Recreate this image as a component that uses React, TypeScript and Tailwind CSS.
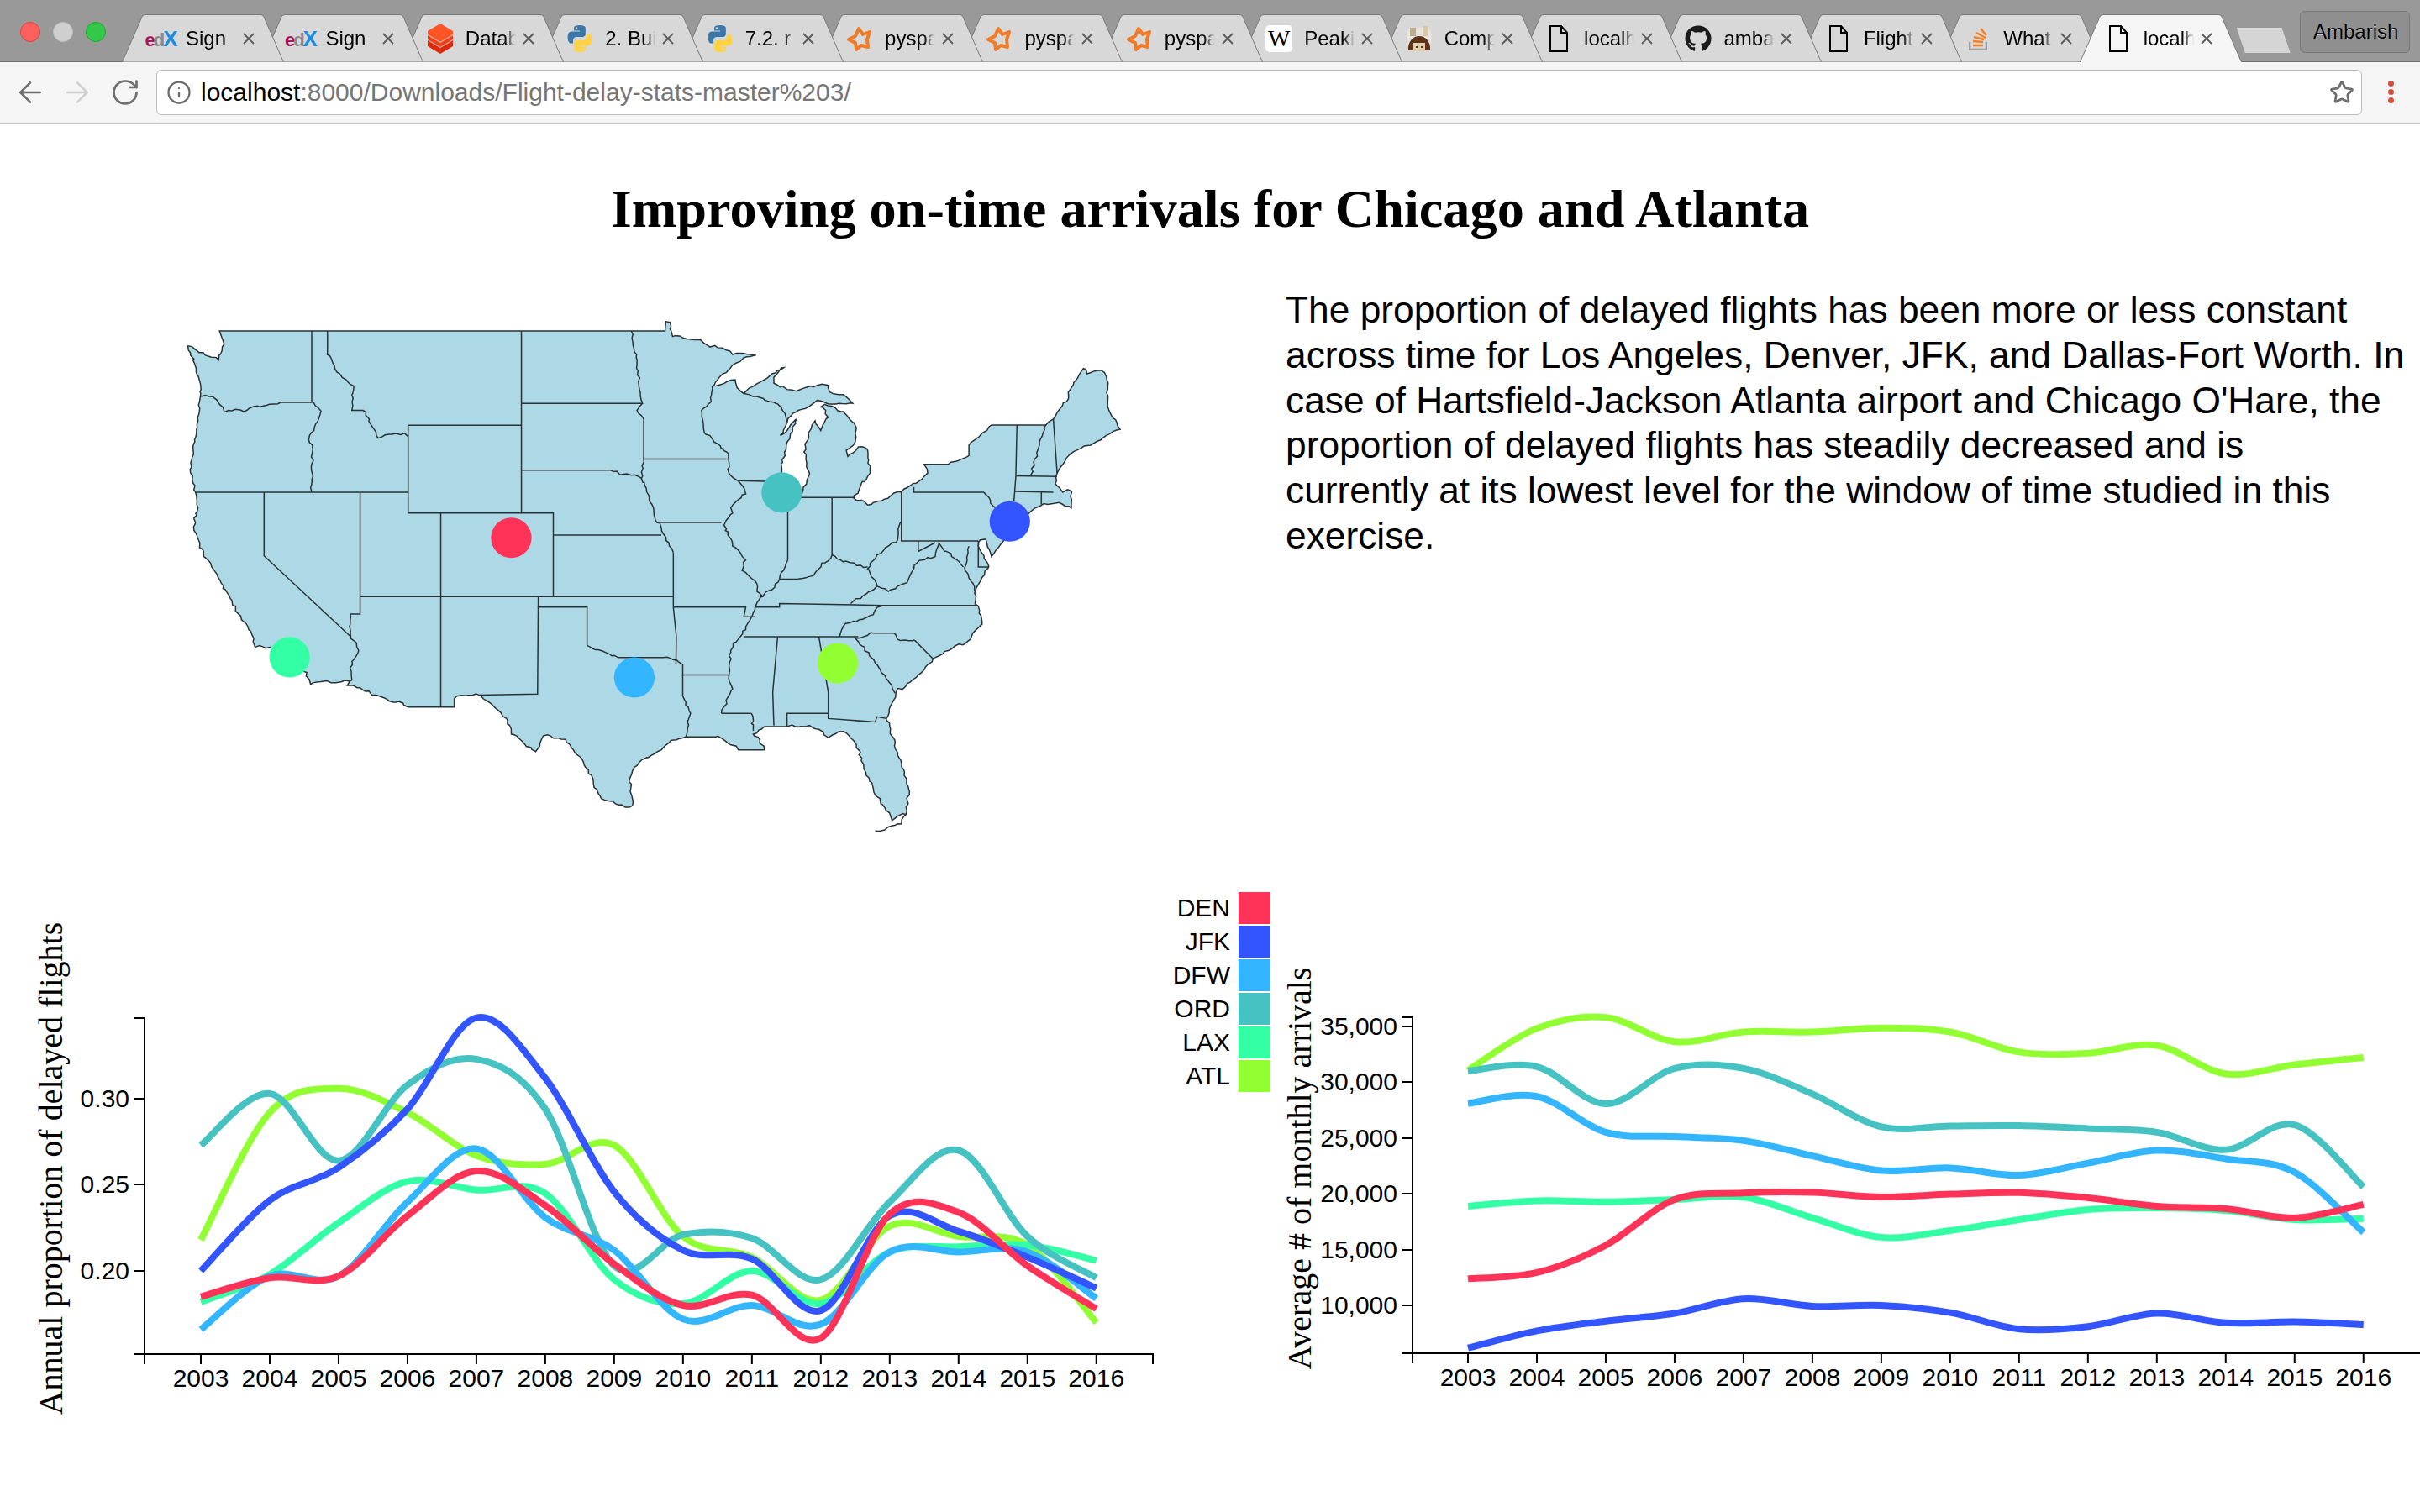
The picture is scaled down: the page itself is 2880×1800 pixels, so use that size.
import type { ReactNode } from 'react';
import { ArrowLeft, ArrowRight, Info, RotateCw, Star } from 'lucide-react';
import { FaGithub } from 'react-icons/fa';

const colors = {
  DEN: '#ff3358',
  JFK: '#3355ff',
  DFW: '#33b5ff',
  ORD: '#47c2c2',
  LAX: '#33ffa5',
  ATL: '#92ff33',
};

type Airport = keyof typeof colors;

const legend: Airport[] = ['DEN', 'JFK', 'DFW', 'ORD', 'LAX', 'ATL'];
const drawOrder: Airport[] = ['ATL', 'LAX', 'ORD', 'DFW', 'JFK', 'DEN'];
const years = Array.from({ length: 14 }, (_, i) => 2003 + i);

const summary = [
  'The proportion of delayed flights has been more or less constant',
  'across time for Los Angeles, Denver, JFK, and Dallas-Fort Worth. In',
  "case of Hartsfield-Jackson Atlanta airport and Chicago O'Hare, the",
  'proportion of delayed flights has steadily decreased and is',
  'currently at its lowest level for the window of time studied in this',
  'exercise.',
];

const delayed: Record<Airport, number[]> = {
  ATL: [0.218, 0.292, 0.306, 0.292, 0.267, 0.262, 0.273, 0.22, 0.208, 0.183, 0.226, 0.22, 0.215, 0.17],
  LAX: [0.182, 0.198, 0.228, 0.252, 0.247, 0.245, 0.195, 0.181, 0.2, 0.181, 0.211, 0.214, 0.215, 0.206],
  ORD: [0.273, 0.303, 0.264, 0.308, 0.323, 0.294, 0.203, 0.221, 0.219, 0.195, 0.24, 0.27, 0.22, 0.196],
  DFW: [0.166, 0.197, 0.197, 0.24, 0.271, 0.231, 0.212, 0.172, 0.18, 0.169, 0.211, 0.211, 0.211, 0.184],
  JFK: [0.2, 0.241, 0.26, 0.294, 0.347, 0.312, 0.246, 0.212, 0.207, 0.177, 0.232, 0.223, 0.208, 0.19],
  DEN: [0.185, 0.196, 0.197, 0.232, 0.258, 0.238, 0.204, 0.18, 0.186, 0.161, 0.233, 0.234, 0.203, 0.178],
};

const arrivals: Record<Airport, number[]> = {
  ATL: [31080, 34840, 35820, 33630, 34510, 34510, 34870, 34510, 32710, 32610, 33300, 30750, 31570, 32220],
  LAX: [18890, 19380, 19280, 19480, 19710, 17840, 16110, 16700, 17680, 18590, 18730, 18500, 17680, 17780],
  ORD: [31010, 31400, 28070, 31240, 31240, 28950, 26010, 26080, 26110, 25850, 25520, 23950, 26180, 20620],
  DFW: [28100, 28730, 25520, 25130, 24770, 23400, 22090, 22320, 21670, 22750, 23890, 23140, 21930, 16540],
  JFK: [6180, 7710, 8590, 9280, 10590, 9930, 10000, 9350, 7880, 8100, 9280, 8430, 8530, 8270],
  DEN: [12390, 12940, 15390, 19480, 20070, 20130, 19710, 19970, 20100, 19640, 18890, 18660, 17840, 19050],
};

// cardinal spline through the yearly points
function smooth(pts: [number, number][]) {
  let d = `M${pts[0][0]},${pts[0][1]}`;
  for (let i = 0; i < pts.length - 1; i++) {
    const p0 = pts[i - 1] || pts[i];
    const p1 = pts[i];
    const p2 = pts[i + 1];
    const p3 = pts[i + 2] || p2;
    d += `C${p1[0] + (p2[0] - p0[0]) / 6},${p1[1] + (p2[1] - p0[1]) / 6} ${p2[0] - (p3[0] - p1[0]) / 6},${p2[1] - (p3[1] - p1[1]) / 6} ${p2[0]},${p2[1]}`;
  }
  return d;
}

type ChartProps = {
  width: number;
  axisX: number;
  firstX: number;
  axisTop: number;
  axisBottom: number;
  ticks: { label: string; y: number }[];
  data: Record<Airport, number[]>;
  toY: (v: number) => number;
  title: string;
  titleX: number;
};

function LineChart({ width, axisX, firstX, axisTop, axisBottom, ticks, data, toY, title, titleX }: ChartProps) {
  const step = 81.98;
  const endX = axisX + 1200;
  return (
    <svg width={width} height={660} className="block shrink-0 font-['Liberation_Sans',Arial,sans-serif]">
      <text
        transform={`translate(${titleX} 331) rotate(-90)`}
        textAnchor="middle"
        fontSize={40}
        fontFamily="'Liberation Serif', 'Times New Roman', serif"
        fill="#000"
      >
        {title}
      </text>

      {/* y axis */}
      <path d={`M${axisX - 12},${axisTop}H${axisX}V${axisBottom}H${axisX - 12}`} fill="none" stroke="#000" strokeWidth={2} />
      {ticks.map((t) => (
        <g key={t.label}>
          <line x1={axisX - 12} x2={axisX} y1={t.y} y2={t.y} stroke="#000" strokeWidth={2} />
          <text x={axisX - 18} y={t.y + 10} textAnchor="end" fontSize={30} fill="#000">
            {t.label}
          </text>
        </g>
      ))}

      {/* x axis */}
      <path d={`M${axisX},${axisBottom + 12}V${axisBottom}H${endX}V${axisBottom + 12}`} fill="none" stroke="#000" strokeWidth={2} />
      {years.map((y, i) => (
        <g key={y}>
          <line x1={firstX + i * step} x2={firstX + i * step} y1={axisBottom} y2={axisBottom + 12} stroke="#000" strokeWidth={2} />
          <text x={firstX + i * step} y={axisBottom + 39} textAnchor="middle" fontSize={30} fill="#000">
            {y}
          </text>
        </g>
      ))}

      {drawOrder.map((a) => (
        <path
          key={a}
          d={smooth(data[a].map((v, i) => [firstX + i * step, toY(v)] as [number, number]))}
          fill="none"
          stroke={colors[a]}
          strokeWidth={8}
        />
      ))}
    </svg>
  );
}

/* ---- map, traced in a 2576x1568 box ---- */
const north = '137,82 1325,82';
const eastCoast =
  '207,55 218,57 225,98 262,105 300,108 325,128 345,130 385,150 447,152 405,170 378,190 335,240 392,222 397,245 415,262 430,245 470,222 490,205 522,187 495,215 495,232 530,250 555,255 600,243 640,238 645,258 680,265 705,290 660,292 640,292 620,283 590,298 560,310 530,345 512,382 535,360 555,335 545,370 528,410 518,460 516,490 520,540 570,548 590,490 575,430 590,370 605,340 620,368 640,330 620,300 650,298 690,325 715,360 712,400 688,425 692,442 720,415 740,418 752,490 725,530 708,562 745,582 790,565 835,545 880,515 905,490 895,465 960,465 1015,440 1015,410 1075,352 1220,352 1240,335 1275,285 1285,250 1320,190 1330,205 1360,195 1382,215 1385,300 1395,325 1418,365 1390,378 1340,410 1285,435 1255,480 1245,520 1265,545 1285,540 1288,590 1255,575 1225,580 1180,600 1110,680 1075,730 1060,680 1045,682 1040,700 1068,758 1050,790 1030,835 1032,860 1050,925 1005,980 960,1000 920,1022 880,1070 820,1122 795,1195 830,1310 855,1400 848,1470 810,1488 780,1440 760,1395 735,1340 715,1270 680,1232 640,1250 590,1215 530,1218 470,1218 440,1240 470,1285 400,1285 340,1248 260,1248 215,1265 130,1330 110,1370 118,1445';
const westCoast =
  '1230,1450 1155,1425 1110,1330 1060,1255 1000,1245 980,1290 915,1240 905,1200 830,1128 763,1138 763,1162 640,1162 478,1100 490,1085 380,1097 362,1060 320,1005 232,990 215,940 172,870 130,780 95,730 68,645 80,590 73,545 60,490 80,340 88,250 75,190 53,125 135,165 150,120';

function parse(s: string) {
  return s.split(' ').map((p) => p.split(',').map(Number) as [number, number]);
}

// the real borders wander: break long slanted runs into small wobbling steps
function rough(s: string, dx = 0) {
  const pts = parse(s);
  const out: string[] = [];
  pts.forEach(([x, y], i) => {
    const next = pts[i + 1];
    out.push(`${x + dx},${y}`);
    if (!next || next[0] === x || next[1] === y) return;
    const steps = Math.floor(Math.hypot(next[0] - x, next[1] - y) / 9);
    for (let k = 1; k < steps; k++) {
      const t = k / steps;
      const wob = Math.sin(k * 12.9898 + x * 78.233) * 43758.5453;
      const a = (wob - Math.floor(wob) - 0.5) * 7;
      const b = ((wob * 3.1) % 1) * 5 - 2;
      out.push(`${(x + (next[0] - x) * t + a + dx).toFixed(1)},${(y + (next[1] - y) * t + b).toFixed(1)}`);
    }
  });
  return out.join(' ');
}

const straightWest = [
  '383,82 383,285',
  '640,353 942,353 942,605 640,605 640,353',
  '942,82 942,353',
  '942,290 1265,290',
  '1265,450 1492,450',
  '1303,632 1475,632',
  '942,605 1027,605 1027,845',
  '942,482 1180,482',
  '1027,668 1315,668',
  '727,605 727,1162',
  '512,845 1347,845',
  '73,545 640,545',
  '512,545 512,895 485,895',
  '256,545 256,728 487,960',
  '987,845 985,1125 830,1128',
  '985,875 1117,875 1117,985',
  '1347,718 1347,875 1355,960 1354,1038',
];

const riverWest = [
  '88,270 130,280 150,315 210,310 300,287 388,287',
  '388,287 408,312 375,395 385,410 383,545',
  '425,82 425,150 450,200 495,240 490,310 520,310 560,390 620,380 640,385',
  '1235,82 1250,180 1265,290 1250,310 1268,335 1268,450 1262,505',
  '1180,482 1205,495 1262,505 1295,600 1303,632 1335,690 1347,718',
  '485,895 487,960 508,1000 485,1050 490,1085',
  '1117,985 1200,1020 1320,1020 1372,1040 1372,1130 1393,1180 1380,1250',
];

const straightEast = [
  '252,1070 377,1070',
  '228,875 420,875 415,903 445,903',
  '398,512 516,515',
  '415,960 720,960',
  '505,960 492,1120 495,1215',
  '615,960 640,1120 640,1195 765,1205 770,1190 795,1195',
  '530,1218 530,1180 640,1180',
  '870,970 918,1022',
  '445,875 510,875 510,865 785,870 1035,870',
  '532,548 532,740',
  '532,560 710,560',
  '650,562 650,725',
  '835,545 835,685 1040,685',
  '868,530 868,545 1055,545',
  '1040,685 1040,760 1068,760',
  '880,685 880,715 925,690',
  '1143,352 1140,500 1135,570',
  '1240,335 1250,490',
  '1140,498 1250,500',
  '1137,543 1240,545',
  '1208,545 1208,580',
  '355,1180 435,1180',
];

const riverEast = [
  '330,240 328,285 302,310 310,375 370,430 375,490 398,512',
  '398,512 420,550 380,590 385,605 362,640 385,700 420,740 410,770 445,800 450,830 465,845 445,875 420,940 380,1000 375,1070 385,1110 355,1180',
  '435,1180 440,1230',
  '415,262 430,265 500,290 525,320 530,345',
  '712,965 790,1070 818,1122',
  '712,965 760,950 815,950 825,968 870,970',
  '670,960 680,930 750,900 785,870',
  '700,865 770,815 745,765 770,725 820,690 833,630',
  '465,845 490,825 510,795 550,795 600,785 650,725 680,745 745,760',
  '532,740 510,795',
  '1055,545 1085,590',
  '770,815 800,830 850,805 875,750 925,730 935,690 950,715 1000,760',
  '1220,352 1180,495',
  '1015,700 1005,770 1030,830',
  '848,1470 835,1498 790,1515 765,1518',
];

const dots: { a: Airport; x: number; y: number }[] = [
  { a: 'DEN', x: 915, y: 676 },
  { a: 'LAX', x: 324, y: 1019 },
  { a: 'DFW', x: 1243, y: 1077 },
  { a: 'ORD', x: 1636, y: 546 },
  { a: 'ATL', x: 1785, y: 1036 },
  { a: 'JFK', x: 2244, y: 629 },
];

function UsMap() {
  return (
    <svg width={1150} height={650} viewBox="0 0 2576 1568" preserveAspectRatio="none" className="block shrink-0">
      <polygon
        points={`${north} ${rough(eastCoast, 1120)} ${rough(westCoast)}`}
        fill="#add8e6"
        stroke="#2a3236"
        strokeWidth={1.5}
        vectorEffect="non-scaling-stroke"
      />
      <g fill="none" stroke="#2a3236" strokeWidth={1.5}>
        {straightWest.map((p) => (
          <polyline key={p} points={p} vectorEffect="non-scaling-stroke" />
        ))}
        {riverWest.map((p) => (
          <polyline key={p} points={rough(p)} vectorEffect="non-scaling-stroke" />
        ))}
        {riverEast.map((p) => (
          <polyline key={p} points={rough(p, 1120)} vectorEffect="non-scaling-stroke" />
        ))}
        <g transform="translate(1120 0)">
          {straightEast.map((p) => (
            <polyline key={p} points={p} vectorEffect="non-scaling-stroke" />
          ))}
        </g>
      </g>
      {dots.map((d) => (
        <ellipse key={d.a} cx={d.x} cy={d.y} rx={54} ry={58} fill={colors[d.a]} />
      ))}
    </svg>
  );
}

/* ---- browser chrome ---- */
const PythonIcon = () => (
  <svg width={32} height={32} viewBox="3 2 26 28">
    <path
      fill="#3b77a8"
      d="M15.9 2c-6.4 0-6 2.8-6 2.8v2.9H16v.9H7.500S3.400 8.100 3.400 14.600s3.600 6.300 3.600 6.300h2.100v-3s-.1-3.600 3.500-3.600h6s3.400.1 3.400-3.300V5.500S22.900 2 15.900 2zM12.500 4a1.100 1.100 0 110 2.200 1.100 1.100 0 010-2.200z"
    />
    <path
      fill="#ffd343"
      d="M16.100 30c6.400 0 6-2.800 6-2.800v-2.900H16v-.9h8.500s4.100.5 4.100-6-3.600-6.300-3.600-6.300h-2.100v3s.1 3.600-3.500 3.600h-6s-3.400-.1-3.400 3.300v5.500S9.100 30 16.100 30zm3.400-2a1.100 1.100 0 110-2.200 1.100 1.100 0 010 2.200z"
    />
  </svg>
);

const SparkIcon = () => (
  <svg width={32} height={33} viewBox="0 0 32 33">
    <polygon
      points="15,4 20,11 28,8 25,17 26,26 18,24 12,29 11,21 3,17 11,13"
      fill="none"
      stroke="#f07a26"
      strokeWidth={4}
      strokeLinejoin="round"
    />
  </svg>
);

const FileIcon = () => (
  <svg width={32} height={34} viewBox="0 0 32 34">
    <path d="M6 2h13l7 8v22H6zM19 2v8h7" fill="none" stroke="#000" strokeWidth={2} />
  </svg>
);

const DataIcon = () => (
  <svg width={32} height={36} viewBox="0 0 32 36">
    <polygon points="1,20 16,29 31,20 31,27 16,36 1,27" fill="#dd2a0c" />
    <polygon points="1,14 16,23 31,14 31,19 16,28 1,19" fill="#f0401a" />
    <polygon points="16,0 31,9 31,13 16,22 1,13 1,9" fill="#ff5424" />
  </svg>
);

const AvatarIcon = () => (
  <svg width={32} height={34} viewBox="0 0 32 34">
    <path d="M3 5L27 3L31 13L28 30H4L1 13Z" fill="#e8e6e2" />
    <rect x={5} y={4} width={7} height={10} fill="#b9aa90" />
    <rect x={20} y={2} width={7} height={12} fill="#d9c8a4" />
    <path d="M3 31C2 20 9 14 16 14S30 20 29 31H23C23 24 20 22 16 22S9 24 9 31Z" fill="#5e3216" />
    <rect x={9} y={22} width={14} height={10} fill="#e2cfae" />
    <rect x={12} y={26} width={2} height={2} fill="#5e3216" />
    <rect x={18} y={26} width={2} height={2} fill="#5e3216" />
  </svg>
);

const StackIcon = () => (
  <svg width={22} height={27} viewBox="0 0 22 27">
    <path d="M1 17V26H21V17" fill="none" stroke="#9aa0a6" strokeWidth={2.500} />
    <g stroke="#f48024" strokeWidth={2.500}>
      <line x1={5} y1={21} x2={17} y2={21} />
      <line x1={5} y1={16} x2={17} y2={17} />
      <line x1={6} y1={11} x2={18} y2={14} />
      <line x1={9} y1={6} x2={20} y2={12} />
      <line x1={14} y1={1} x2={21} y2={9} />
    </g>
  </svg>
);

const EdxIcon = () => (
  <span className="text-[22px] font-bold tracking-[-2px]">
    <span className="text-[#a6185f]">e</span>
    <span className="text-[#8a8a8a]">d</span>
    <span className="text-[#1c8be0] text-[26px]">X</span>
  </span>
);

const WikiIcon = () => (
  <span className="flex h-[32px] w-[32px] items-center justify-center rounded-[5px] bg-white font-['Liberation_Serif',serif] text-[28px] text-black">
    W
  </span>
);

const tabs: { title: string; icon: ReactNode }[] = [
  { title: 'Sign', icon: <EdxIcon /> },
  { title: 'Sign', icon: <EdxIcon /> },
  { title: 'Datab', icon: <DataIcon /> },
  { title: '2. Bui', icon: <PythonIcon /> },
  { title: '7.2. r', icon: <PythonIcon /> },
  { title: 'pyspa', icon: <SparkIcon /> },
  { title: 'pyspa', icon: <SparkIcon /> },
  { title: 'pyspa', icon: <SparkIcon /> },
  { title: 'Peaki', icon: <WikiIcon /> },
  { title: 'Comp', icon: <AvatarIcon /> },
  { title: 'localh', icon: <FileIcon /> },
  { title: 'amba', icon: <FaGithub size={32} color="#1b1b1b" /> },
  { title: 'Flight', icon: <FileIcon /> },
  { title: 'What', icon: <StackIcon /> },
  { title: 'localh', icon: <FileIcon /> },
];

function Tab({ title, icon, active, index }: { title: string; icon: ReactNode; active: boolean; index: number }) {
  return (
    <div
      className="relative h-[57px] w-[193px] shrink-0 not-first:-ml-[26.6px]"
      style={{ zIndex: active ? 50 : 30 - index }}
    >
      <svg width={193} height={57} className="absolute inset-0">
        <path
          d="M0.500,57L24,3Q25,0.500 28,0.500H165Q168,0.500 169,3L192.500,57Z"
          fill={active ? '#f5f5f5' : '#d8d8d8'}
          stroke="#7a7a7a"
          strokeWidth={1}
        />
        {active && <rect x={1} y={56} width={191} height={1} fill="#f5f5f5" />}
      </svg>
      <div className="relative flex h-full items-center pt-[1px]">
        <span className="ml-[30px] flex w-[32px] items-center justify-center">{icon}</span>
        <span className="ml-[14px] w-[66px] whitespace-nowrap text-[24px] text-black [mask-image:linear-gradient(to_right,black_46px,transparent_60px)]">
          {title}
        </span>
        <svg width={16} height={16} viewBox="0 0 16 16" className="ml-[1px]">
          <path d="M2 2L14 14M14 2L2 14" stroke="#5a5a5a" strokeWidth={1.8} />
        </svg>
      </div>
    </div>
  );
}

function BrowserChrome() {
  return (
    <div className="font-['Liberation_Sans',Arial,sans-serif]">
      <div className="flex h-[74px] border-b border-[#6e6e6e] bg-[#999999]">
        <div className="flex w-[145px] shrink-0 gap-[15px] pl-[24px] pt-[26px]">
          <span className="h-[24px] w-[24px] rounded-full border border-[#e0443e] bg-[#fc615d]" />
          <span className="h-[24px] w-[24px] rounded-full border border-[#bdbdbd] bg-[#cfcfcf]" />
          <span className="h-[24px] w-[24px] rounded-full border border-[#1aab29] bg-[#34c84a]" />
        </div>
        <div className="flex pt-[17px]">
          {tabs.map((t, i) => (
            <Tab key={i} index={i} title={t.title} icon={t.icon} active={i === tabs.length - 1} />
          ))}
        </div>
        <div className="ml-[-6px] mt-[33px] h-[30px] w-[64px] shrink-0 bg-[#d5d5d5] [clip-path:polygon(0_0,84%_0,100%_100%,16%_100%)]" />
        <div className="ml-[11px] mt-[13px] flex h-[50px] w-[131px] shrink-0 items-center justify-center rounded-[6px] border border-[#777777] bg-[#8f8f8f] pl-[3px] text-[24px] text-black [text-shadow:0_1px_0_#cfcfcf]">
          Ambarish
        </div>
      </div>
      <div className="flex h-[74px] items-center border-b-2 border-[#c8c8c8] bg-[#f5f5f5] pb-[1px]">
        <span className="ml-[8px] flex w-[56px] justify-center text-[#6e6e6e]">
          <ArrowLeft size={40} strokeWidth={1.6} />
        </span>
        <span className="flex w-[56px] justify-center text-[#d0d0d0]">
          <ArrowRight size={40} strokeWidth={1.6} />
        </span>
        <span className="flex w-[58px] justify-center text-[#6e6e6e]">
          <RotateCw size={36} strokeWidth={1.8} />
        </span>
        <div className="ml-[8px] flex h-[54px] min-w-0 flex-1 items-center rounded-[6px] border border-[#bbbbbb] bg-white pl-[11px] pr-[8px]">
          <Info size={30} strokeWidth={1.8} className="text-[#6a6a6a]" />
          <span className="ml-[11px] flex-1 text-[30px] text-[#767676]">
            <span className="text-black">localhost</span>:8000/Downloads/Flight-delay-stats-master%203/
          </span>
          <Star size={30} strokeWidth={2.2} className="text-[#6e6e6e]" />
        </div>
        <div className="flex w-[69px] shrink-0 flex-col items-center gap-[3px]">
          <span className="h-[7px] w-[7px] rounded-full bg-[#d0523f]" />
          <span className="h-[7px] w-[7px] rounded-full bg-[#d0523f]" />
          <span className="h-[7px] w-[7px] rounded-full bg-[#d0523f]" />
        </div>
      </div>
    </div>
  );
}

export default function App() {
  return (
    <div className="h-[1800px] w-[2880px] overflow-hidden bg-white text-black">
      <BrowserChrome />

      <h1 className="h-[192px] pt-[64px] text-center font-['Liberation_Serif','Times_New_Roman',serif] text-[64.3px] font-bold leading-[74px]">
        Improving on-time arrivals for Chicago and Atlanta
      </h1>

      <div className="flex h-[720px] items-start">
        <div className="ml-[200px] mt-[20px]">
          <UsMap />
        </div>
        <p className="ml-[180px] flex-1 pt-[2px] font-['Liberation_Sans',Arial,sans-serif] text-[44.3px] leading-[53.8px]">
          {summary.map((line) => (
            <span key={line} className="block whitespace-nowrap">
              {line}
            </span>
          ))}
        </p>
      </div>

      <div className="flex items-start">
        <LineChart
          width={1400}
          axisX={172}
          firstX={239}
          axisTop={152}
          axisBottom={552}
          ticks={[
            { label: '0.30', y: 248 },
            { label: '0.25', y: 350 },
            { label: '0.20', y: 453 },
          ]}
          data={delayed}
          toY={(v) => 453 - (v - 0.2) * 2050}
          title="Annual proportion of delayed flights"
          titleX={74}
        />

        {/* legend */}
        <div className="mt-[2px] flex w-[112px] shrink-0 flex-col gap-[2px] font-['Liberation_Sans',Arial,sans-serif] text-[30px]">
          {legend.map((a) => (
            <div key={a} className="flex h-[38px] items-center justify-end gap-[10px]">
              <span className="-mt-[2px]">{a}</span>
              <span className="h-[38px] w-[38px] shrink-0" style={{ backgroundColor: colors[a] }} />
            </div>
          ))}
        </div>

        <div className="ml-[8px]">
          <LineChart
            width={1360}
            axisX={161}
            firstX={227}
            axisTop={151}
            axisBottom={551}
            ticks={[
              { label: '35,000', y: 162 },
              { label: '30,000', y: 228 },
              { label: '25,000', y: 295 },
              { label: '20,000', y: 361 },
              { label: '15,000', y: 428 },
              { label: '10,000', y: 494 },
            ]}
            data={arrivals}
            toY={(v) => 494 - (v - 10000) * 0.01328}
            title="Average # of monthly arrivals"
            titleX={40}
          />
        </div>
      </div>
    </div>
  );
}
